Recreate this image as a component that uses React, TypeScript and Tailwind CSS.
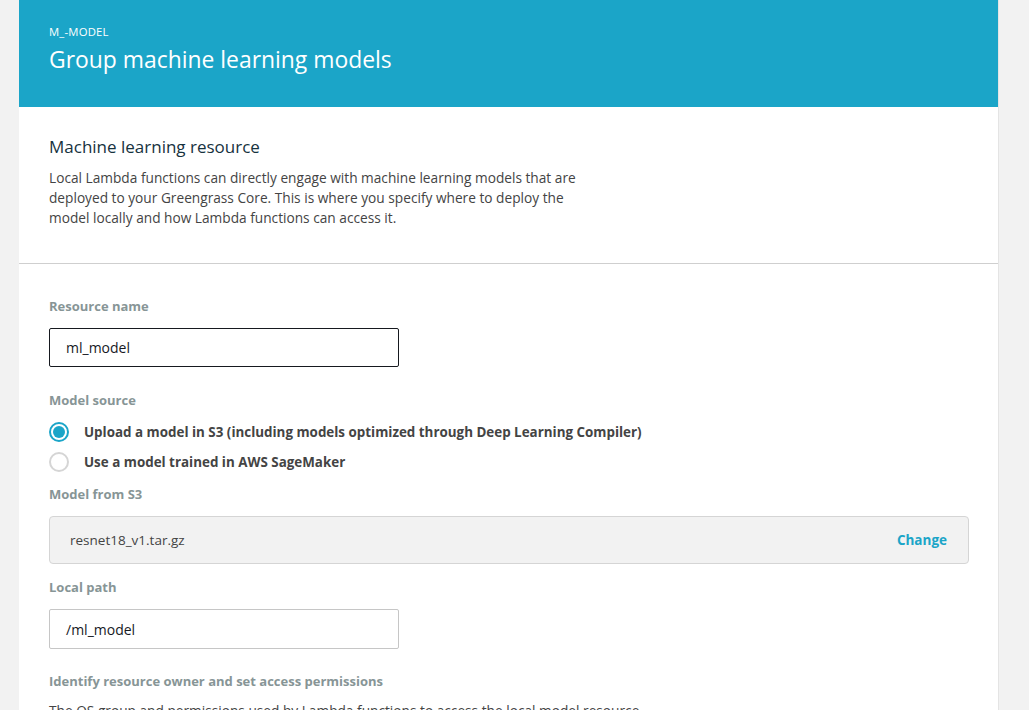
import React from "react";

export default function App() {
  return (
    <div className="min-h-[710px] bg-[#f2f2f2] overflow-hidden" style={{ fontFamily: '"Open Sans", "Noto Sans", sans-serif' }}>
      <div className="ml-[19px] w-[980px] bg-white border-r border-[#e4e4e4]">
        <div className="bg-[#1ba5c8] h-[107px] px-[30px] pt-[24px] text-white">
          <div className="text-[11.3px] leading-[16px] tracking-[0.2px]">M_-MODEL</div>
          <div className="text-[22.9px] leading-[30px] mt-[5px]">Group machine learning models</div>
        </div>
        <div className="px-[30px] pt-[27px] pb-[35px] border-b border-[#cfcfcf]">
          <h2 className="text-[17px] leading-[26px] text-[#16323e]">Machine learning resource</h2>
          <p className="mt-[8px] w-[545px] text-[13.7px] leading-[20px] text-[#444]">
            Local Lambda functions can directly engage with machine learning models that are deployed to your Greengrass Core. This is where you specify where to deploy the model locally and how Lambda functions can access it.
          </p>
        </div>
        <div className="px-[30px] pt-[33px] h-[446px]">
          <div className="text-[13px] leading-[18px] font-bold text-[#879596]">Resource name</div>
          <div className="mt-[13px] w-[350px] h-[39px] border border-[#16191f] rounded-[2px] flex items-center px-[16px] text-[14px] text-[#16191f]">ml_model</div>
          <div className="mt-[24px] text-[13px] leading-[18px] font-bold text-[#879596]">Model source</div>
          <div className="mt-[13px] flex flex-col gap-[10px]">
            <label className="flex items-center h-[20px]">
              <span className="w-[20px] h-[20px] rounded-full border-[2px] border-[#1ba5c8] flex items-center justify-center">
                <span className="w-[12px] h-[12px] rounded-full bg-[#1ba5c8]" />
              </span>
              <span className="ml-[15px] text-[13.4px] font-bold text-[#444]">Upload a model in S3 (including models optimized through Deep Learning Compiler)</span>
            </label>
            <label className="flex items-center h-[20px]">
              <span className="w-[20px] h-[20px] rounded-full border-[2px] border-[#d5d5d5]" />
              <span className="ml-[15px] text-[13.4px] font-bold text-[#444]">Use a model trained in AWS SageMaker</span>
            </label>
          </div>
          <div className="mt-[13px] text-[13px] leading-[18px] font-bold text-[#879596]">Model from S3</div>
          <div className="mt-[13px] w-[920px] h-[48px] bg-[#f2f2f2] border border-[#d5d5d5] rounded-[4px] flex items-center justify-between pl-[20px] pr-[21px]">
            <span className="text-[13.5px] text-[#444]">resnet18_v1.tar.gz</span>
            <span className="text-[13.5px] font-bold text-[#1ba5c8]">Change</span>
          </div>
          <div className="mt-[14px] text-[13px] leading-[18px] font-bold text-[#879596]">Local path</div>
          <div className="mt-[13px] w-[350px] h-[40px] border border-[#c6c6c6] rounded-[2px] flex items-center px-[16px] text-[14px] text-[#16191f]">/ml_model</div>
          <div className="mt-[23px] text-[13px] leading-[18px] font-bold text-[#879596]">Identify resource owner and set access permissions</div>
          <p className="mt-[11px] text-[13.7px] leading-[20px] text-[#444]">The OS group and permissions used by Lambda functions to access the local model resource.</p>
        </div>
      </div>
    </div>
  );
}
